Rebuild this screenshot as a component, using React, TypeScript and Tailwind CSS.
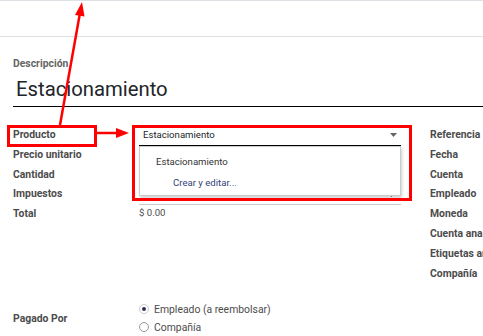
import React from "react";

const leftLabels = ["Producto", "Precio unitario", "Cantidad", "Impuestos", "Total"];
const rightLabels = [
  "Referencia",
  "Fecha",
  "Cuenta",
  "Empleado",
  "Moneda",
  "Cuenta analítica",
  "Etiquetas analíticas",
  "Compañía",
];

function Caret() {
  return (
    <svg width="7" height="4" viewBox="0 0 7 4" className="shrink-0">
      <polygon points="0,0 7,0 3.5,4" fill="#666" />
    </svg>
  );
}

export default function App() {
  return (
    <div className="relative w-[483px] h-[336px] overflow-hidden bg-white font-['Roboto',sans-serif] text-[#4c4c4c]">
      {/* Top bar */}
      <div className="h-[37px] border-t border-b border-[#dde1e6]" />

      {/* Description */}
      <div className="pl-[13px] pt-[20px]">
        <div className="text-[10.4px] leading-[13px] font-bold text-[#666]">Descripción</div>
        <div className="mt-[7px] pl-[3px] pb-[5px] border-b border-black text-[20.3px] leading-[24px] text-[#212529]">
          Estacionamiento
        </div>
      </div>

      {/* Main fields */}
      <div className="mt-[18px] flex pl-[13px]">
        <div className="flex">
          <div className="w-[126px] flex flex-col">
            {leftLabels.map((l) => (
              <div key={l} className="h-[19.75px] flex items-center text-[10.4px] font-bold whitespace-nowrap">
                {l}
              </div>
            ))}
          </div>

          <div className="relative w-[262px] flex flex-col text-[9.6px] text-[#212529]">
            <div className="h-[21px] flex items-center justify-between pl-[4px] pr-[4px] border-b border-black">
              <span>Estacionamiento</span>
              <Caret />
            </div>
            <div className="h-[20px]" />
            <div className="h-[19px]" />
            <div className="h-[20px] flex items-center justify-end pr-[6px] border-b border-[#ccc]">
              <Caret />
            </div>
            <div className="h-[17px] flex items-center text-[#4c4c4c]">$ 0.00</div>

            {/* Autocomplete dropdown */}
            <div className="absolute top-[21px] left-0 w-[262px] h-[50px] bg-white border border-[#ccc] shadow-[1px_2px_3px_rgba(0,0,0,0.2)] flex flex-col">
              <div className="h-[21px] mt-[5px] flex items-center pl-[16px] text-[#333]">Estacionamiento</div>
              <div className="h-[20px] flex items-center pl-[33px] text-[#33427a]">Crear y editar...</div>
            </div>
          </div>
        </div>

        <div className="ml-[29px] flex-1 overflow-hidden flex flex-col">
          {rightLabels.map((l) => (
            <div key={l} className="h-[19.8px] flex items-center text-[10.4px] font-bold whitespace-nowrap">
              {l}
            </div>
          ))}
        </div>
      </div>

      {/* Pagado por */}
      <div className="mt-[17px] flex pl-[13px]">
        <div className="w-[126px] flex items-center text-[10.4px] font-bold">Pagado Por</div>
        <div className="flex flex-col text-[10.4px]">
          <div className="h-[18px] flex items-center gap-[5px]">
            <span className="w-[10px] h-[10px] rounded-full border border-[#ccc] flex items-center justify-center">
              <span className="w-[4px] h-[4px] rounded-full bg-[#2d3557]" />
            </span>
            <span>Empleado (a reembolsar)</span>
          </div>
          <div className="h-[18px] flex items-center gap-[5px]">
            <span className="w-[10px] h-[10px] rounded-full border border-[#999]" />
            <span>Compañía</span>
          </div>
        </div>
      </div>

      {/* Annotations */}
      <div className="absolute left-[7px] top-[125px] w-[90px] h-[22px] border-[3px] border-[#ff0000]" />
      <div className="absolute left-[132px] top-[125px] w-[280px] h-[76px] border-[3px] border-[#ff0000]" />
      <svg className="absolute left-0 top-0 pointer-events-none" width="483" height="336" viewBox="0 0 483 336">
        <line x1="60" y1="125" x2="79.8" y2="14" stroke="#ff0000" strokeWidth="2.5" />
        <polygon points="82,2 84.5,16.6 75,15" fill="#ff0000" />
        <line x1="97" y1="133" x2="118" y2="133" stroke="#ff0000" strokeWidth="2.5" />
        <polygon points="129,133 116,128 116,138" fill="#ff0000" />
      </svg>
    </div>
  );
}
